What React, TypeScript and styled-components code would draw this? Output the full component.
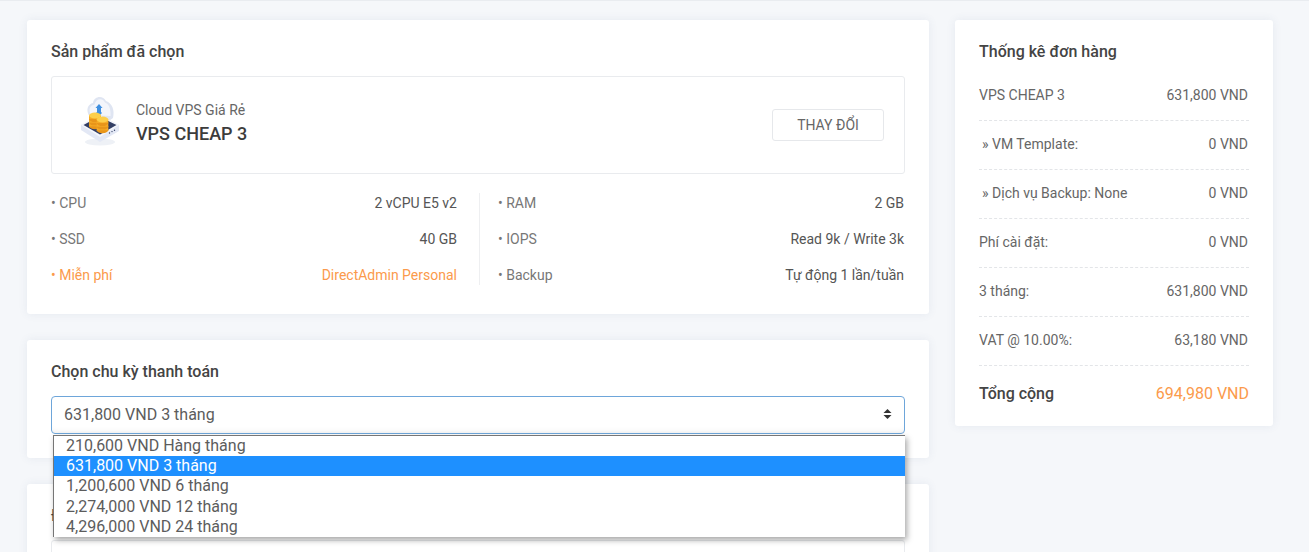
import React from "react";
import styled, { createGlobalStyle } from "styled-components";

const Global = createGlobalStyle`
  html, body { margin: 0; padding: 0; height: 552px; overflow: hidden; background: #f5f7fa; }
  body { font-family: Roboto, "Noto Sans", sans-serif; font-size: 14px; color: #555; }
  * { box-sizing: border-box; }
`;

const Page = styled.div`
  height: 552px;
  overflow: hidden;
  border-top: 1px solid #e9ecf0;
  padding: 19px 36px 0 27px;
  display: grid;
  grid-template-columns: 902px 318px;
  column-gap: 26px;
  align-items: start;
`;
const Column = styled.div`
  display: flex;
  flex-direction: column;
  gap: 26px;
`;
const Card = styled.section`
  position: relative;
  background: #fff;
  border-radius: 3px;
  box-shadow: 0 0 10px rgba(70, 90, 130, 0.09);
  padding: 22px 24px 24px;
`;
const Title = styled.h3`
  margin: 0;
  font-size: 16px;
  line-height: 20px;
  font-weight: 500;
  color: #444;
`;
const Bordered = styled.div`
  margin-top: 14px;
  border: 1px solid #e9ebee;
  border-radius: 3px;
`;
const ProductBox = styled(Bordered)`
  height: 98px;
  display: flex;
  align-items: center;
  padding: 0 20px 0 28px;
`;
const ProductIcon = styled.svg`
  width: 40px;
  height: 55px;
  flex: none;
  margin: 0 16px 5px 0;
`;
const ProductText = styled.div`
  flex: 1;
  margin-bottom: 4px;
`;
const ProductType = styled.div`
  font-size: 14px;
  line-height: 18px;
  color: #666;
`;
const ProductName = styled.div`
  font-size: 18px;
  line-height: 22px;
  margin-top: 4px;
  font-weight: 500;
  color: #3c3c3c;
`;
const ChangeButton = styled.button`
  width: 112px;
  height: 32px;
  background: #fff;
  border: 1px solid #e6e8eb;
  border-radius: 3px;
  font: 400 14px Roboto, sans-serif;
  color: #666;
`;
const Specs = styled.div`
  margin-top: 19px;
  padding-bottom: 5px;
  display: grid;
  grid-template-columns: 1fr 1fr;
`;
const SpecCol = styled.div<{ $right?: boolean }>`
  display: flex;
  flex-direction: column;
  gap: 16px;
  ${(p) => p.$right
    ? "margin-left: 1px; padding: 0 1px 0 18px; border-left: 1px solid #eeeff1;"
    : "padding-right: 21px;"}
`;
const SpecRow = styled.div<{ $accent?: boolean }>`
  display: flex;
  justify-content: space-between;
  line-height: 20px;
  font-size: 14px;
  color: ${(p) => (p.$accent ? "#fb9a4b" : "#555")};
  & > span:first-child { color: ${(p) => (p.$accent ? "#fb9a4b" : "#777")}; }
`;
const SelectBox = styled.div`
  margin-top: 14px;
  height: 38px;
  border: 1px solid #6ea6da;
  border-radius: 4px;
  padding: 0 12px 2px;
  display: flex;
  align-items: center;
  justify-content: space-between;
  font-size: 16px;
  color: #5c5c5c;
  box-shadow: inset 0 -6px 8px -8px rgba(0, 0, 0, 0.15);
`;
const Arrows = styled.svg`
  width: 9px;
  height: 10px;
`;
const Options = styled.div`
  position: absolute;
  left: 26px;
  top: 95px;
  width: 852px;
  z-index: 5;
  background: #fff;
  border-top: 1px solid #767676;
  border-left: 1px solid #767676;
  box-shadow: 2px 3px 6px rgba(0, 0, 0, 0.35);
  font-size: 16px;
  color: #5c5c5c;
`;
const Option = styled.div<{ $selected?: boolean }>`
  height: 20.2px;
  line-height: 20px;
  padding-left: 12px;
  background: ${(p) => (p.$selected ? "#1e90ff" : "transparent")};
  color: ${(p) => (p.$selected ? "#fff" : "#5c5c5c")};
`;
const ThirdBox = styled(Bordered)`
  height: 60px;
`;
const Summary = styled(Card)`
  padding: 22px 24px 0;
  height: 406px;
`;
const SummaryRows = styled.div`
  margin-top: 10px;
`;
const SummaryRow = styled.div`
  height: 49px;
  display: flex;
  justify-content: space-between;
  align-items: center;
  padding: 0 1px 2px 0;
  border-bottom: 1px dashed #e3e5e8;
  font-size: 14px;
  color: #666;
`;
const Indented = styled.span`
  padding-left: 3px;
`;
const Total = styled.div`
  height: 55px;
  display: flex;
  justify-content: space-between;
  align-items: center;
  font-size: 16px;
  font-weight: 500;
  color: #444;
`;
const TotalValue = styled.span`
  color: #fb9a4b;
  font-weight: 400;
`;

const Stack = ({ cx, top, rx, layers }: { cx: number; top: number; rx: number; layers: number }) => (
  <g>
    {Array.from({ length: layers }).map((_, i) => {
      const y = top + (layers - 1 - i) * 3.6;
      return (
        <g key={i}>
          <ellipse cx={cx} cy={y + 3.6} rx={rx} ry={2.9} fill="#e8951a" />
          <rect x={cx - rx} y={y} width={rx * 2} height={3.6} fill="#f6aa25" />
          <ellipse cx={cx} cy={y} rx={rx} ry={2.9} fill={i === layers - 1 ? "#fdcf4a" : "#f9b52e"} />
        </g>
      );
    })}
  </g>
);

const CloudCoins = () => (
  <ProductIcon viewBox="80 95 40 55">
    <ellipse cx="100" cy="142" rx="15" ry="3.5" fill="#eef1f6" />
    <path d="M90 117 C85 110 88 104 93 103 C94 96 103 95 106 101 C112 103 115 110 113 118 L106 123 L95 123 Z" fill="#dfe5f2" />
    <path d="M91 115 C88 110 90 105 94.5 104.5 C96 98 103 97.5 105 102.5 C109 104 111 109 110.5 116 Z" fill="#f3f5fb" />
    <path d="M99 104 L102.5 108 L101 108 L101 112 L102 113 L99 116 L96 113 L97 112 L97 108 L95.5 108 Z" fill="#3f8fe0" />
    <path d="M81 125 L81 130 L100 142 L119 131 L119 125 L100 115 Z" fill="#e3e8f5" />
    <path d="M81 125 L99 115 L119 125 L100 137 Z" fill="#f5f7fc" />
    <path d="M83.5 125 L99 116.5 L116.5 125 L100 134.5 Z" fill="#333f65" />
    <circle cx="109.5" cy="133" r="0.7" fill="#333f65" />
    <circle cx="112" cy="131.6" r="0.7" fill="#333f65" />
    <circle cx="114.5" cy="130.2" r="0.7" fill="#333f65" />
    <Stack cx={95} top={115.5} rx={6} layers={3} />
    <Stack cx={102.5} top={119.5} rx={5.8} layers={3} />
  </ProductIcon>
);

const left = [
  ["CPU", "2 vCPU E5 v2"],
  ["SSD", "40 GB"],
];
const right = [
  ["RAM", "2 GB"],
  ["IOPS", "Read 9k / Write 3k"],
  ["Backup", "Tự động 1 lần/tuần"],
];
const options = [
  "210,600 VND Hàng tháng",
  "631,800 VND 3 tháng",
  "1,200,600 VND 6 tháng",
  "2,274,000 VND 12 tháng",
  "4,296,000 VND 24 tháng",
];
const summary: [React.ReactNode, string][] = [
  ["VPS CHEAP 3", "631,800 VND"],
  [<Indented>» VM Template:</Indented>, "0 VND"],
  [<Indented>» Dịch vụ Backup: None</Indented>, "0 VND"],
  ["Phí cài đặt:", "0 VND"],
  ["3 tháng:", "631,800 VND"],
  ["VAT @ 10.00%:", "63,180 VND"],
];

export default function App() {
  return (
    <Page>
      <Global />
      <Column>
        <Card>
          <Title>Sản phẩm đã chọn</Title>
          <ProductBox>
            <CloudCoins />
            <ProductText>
              <ProductType>Cloud VPS Giá Rẻ</ProductType>
              <ProductName>VPS CHEAP 3</ProductName>
            </ProductText>
            <ChangeButton>THAY ĐỔI</ChangeButton>
          </ProductBox>
          <Specs>
            <SpecCol>
              {left.map(([k, v]) => (
                <SpecRow key={k}><span>• {k}</span><span>{v}</span></SpecRow>
              ))}
              <SpecRow $accent><span>• Miễn phí</span><span>DirectAdmin Personal</span></SpecRow>
            </SpecCol>
            <SpecCol $right>
              {right.map(([k, v]) => (
                <SpecRow key={k}><span>• {k}</span><span>{v}</span></SpecRow>
              ))}
            </SpecCol>
          </Specs>
        </Card>
        <Card>
          <Title>Chọn chu kỳ thanh toán</Title>
          <SelectBox>
            <span>631,800 VND 3 tháng</span>
            <Arrows viewBox="0 0 9 10">
              <path d="M4.5 0 L8.5 4 L0.5 4 Z M4.5 10 L0.5 6 L8.5 6 Z" fill="#333" />
            </Arrows>
          </SelectBox>
          <Options>
            {options.map((o, i) => (
              <Option key={o} $selected={i === 1}>{o}</Option>
            ))}
          </Options>
        </Card>
        <Card>
          <Title>Đ</Title>
          <ThirdBox />
        </Card>
      </Column>
      <Summary>
        <Title>Thống kê đơn hàng</Title>
        <SummaryRows>
          {summary.map(([k, v], i) => (
            <SummaryRow key={i}><span>{k}</span><span>{v}</span></SummaryRow>
          ))}
        </SummaryRows>
        <Total><span>Tổng cộng</span><TotalValue>694,980 VND</TotalValue></Total>
      </Summary>
    </Page>
  );
}
